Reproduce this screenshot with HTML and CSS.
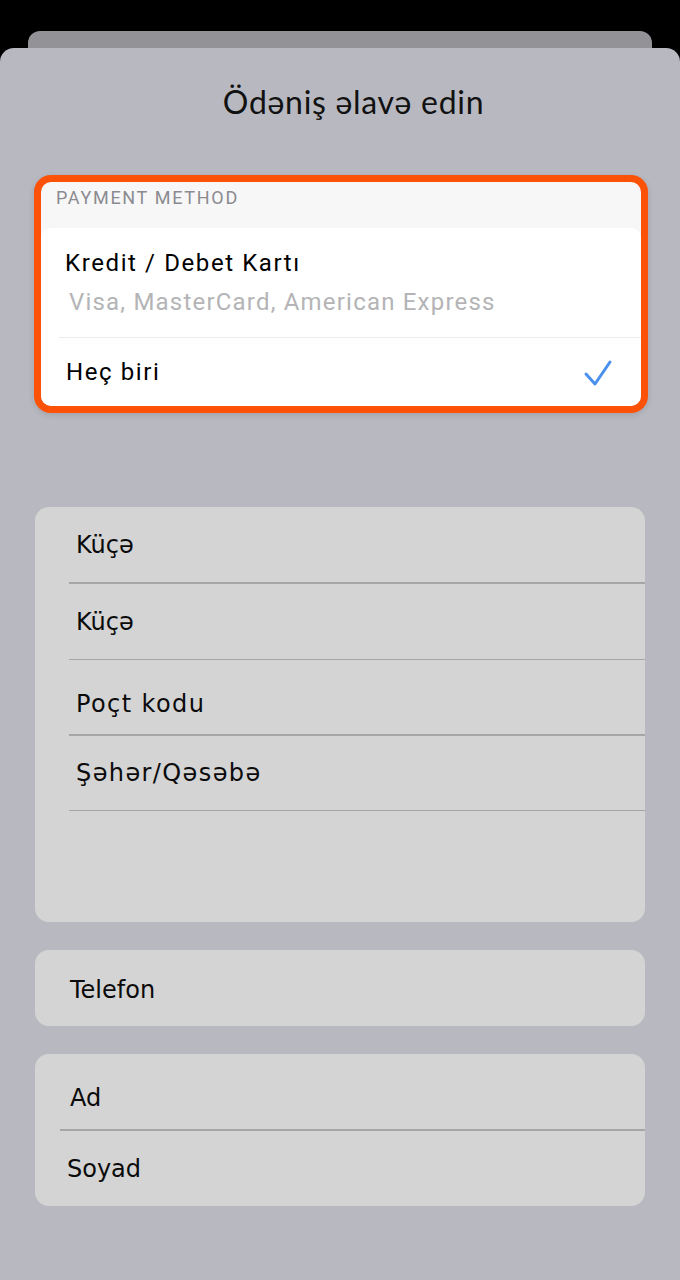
FILE: index.html
```html
<!DOCTYPE html>
<html lang="az">
<head>
<meta charset="utf-8">
<link rel="stylesheet" href="styles.css">
</head>
<body>
<div class="screen">
  <div class="back-card"></div>
  <div class="sheet">
    <h1 class="title">Ödəniş əlavə edin</h1>

    <div class="payment">
      <div class="payment-inner">
        <div class="payment-header">PAYMENT METHOD</div>
        <div class="payment-list">
          <div class="pay-row pay-row-card">
            <div class="pay-title">Kredit / Debet Kartı</div>
            <div class="pay-sub">Visa, MasterCard, American Express</div>
          </div>
          <div class="pay-sep"></div>
          <div class="pay-row pay-row-none">
            <div class="pay-title">Heç biri</div>
            <svg class="check" width="30" height="28" viewBox="0 0 30 28">
              <path d="M3 15 L12 25 L27 3" fill="none" stroke="#4a90ef" stroke-width="3" stroke-linecap="round" stroke-linejoin="round"/>
            </svg>
          </div>
        </div>
      </div>
    </div>

    <div class="card address">
      <div class="field f1">Küçə</div>
      <div class="sep"></div>
      <div class="field f2">Küçə</div>
      <div class="sep"></div>
      <div class="field f3">Poçt kodu</div>
      <div class="sep"></div>
      <div class="field f4">Şəhər/Qəsəbə</div>
      <div class="sep"></div>
    </div>

    <div class="card phone">
      <div class="field">Telefon</div>
    </div>

    <div class="card name">
      <div class="field f-ad">Ad</div>
      <div class="sep sep-name"></div>
      <div class="field f-soyad">Soyad</div>
    </div>
  </div>
</div>
</body>
</html>
```

FILE: styles.css
```css
* { box-sizing: border-box; }
html, body { margin: 0; padding: 0; }
body {
  background: #000;
  font-family: "DejaVu Sans", "Noto Sans", sans-serif;
  width: 680px;
  height: 1280px;
  overflow: hidden;
}
.screen {
  padding-top: 31px;
}
.back-card {
  margin: 0 28px;
  height: 17px;
  background: #939297;
  border-radius: 12px 12px 0 0;
}
.sheet {
  background: #b8b9c0;
  border-radius: 14px 14px 0 0;
  height: 1232px;
  padding-top: 1px;
}
.title {
  margin: 33px 0 0;
  padding-left: 27px;
  font-family: "Lato", "Noto Sans", sans-serif;
  font-weight: 400;
  font-size: 32px;
  letter-spacing: 0.7px;
  line-height: 40px;
  text-align: center;
  color: #111;
  height: 93px;
}
.payment {
  margin: 0 32px 0 34px;
  border: 7px solid #fc5207;
  border-radius: 17px;
  background: #f7f7f8;
  box-shadow: 0 2px 6px rgba(0,0,0,0.12);
  overflow: hidden;
}
.payment-inner {
  border-radius: 10px;
  overflow: hidden;
}
.payment-header {
  height: 46px;
  padding: 6px 0 0 15px;
  font-family: "Roboto", "Liberation Sans", sans-serif;
  font-size: 18px;
  letter-spacing: 1.7px;
  color: #8b8b90;
  line-height: 20px;
}
.payment-list {
  background: #fff;
  border-radius: 10px 10px 0 0;
}
.pay-row {
  padding-left: 24px;
  font-family: "Roboto", "Liberation Sans", sans-serif;
}
.pay-row-card {
  height: 109px;
  padding-top: 20px;
}
.pay-title {
  font-size: 24px;
  line-height: 30px;
  color: #000;
  letter-spacing: 1.6px;
}
.pay-sub {
  font-size: 24px;
  line-height: 30px;
  color: #b4b4b6;
  margin-top: 9px;
  padding-left: 4px;
  letter-spacing: 1.2px;
}
.pay-sep {
  height: 1px;
  background: #ececee;
  margin-left: 18px;
}
.pay-row-none {
  height: 68px;
  display: flex;
  align-items: center;
  justify-content: space-between;
  padding-left: 25px;
  padding-right: 28px;
}
.pay-row-none .check {
  margin-top: 2px;
}
.address {
  margin-top: 94px;
}
.card {
  margin-left: 35px;
  margin-right: 35px;
  background: #d4d4d4;
  border-radius: 14px;
  overflow: hidden;
}
.field {
  padding-left: 41px;
  font-size: 24px;
  color: #0b0b0b;
  display: flex;
  align-items: center;
}
.sep {
  height: 1.5px;
  background: #a6a6a6;
  margin-left: 34px;
}
.address { height: 415px; }
.f1 { height: 75px; padding-top: 1px; }
.f2 { height: 75px; padding-top: 2px; }
.f3 { height: 74px; padding-top: 13px; letter-spacing: 1.4px; }
.f4 { height: 74px; padding-top: 0; letter-spacing: 1.4px; }
.phone {
  margin-top: 28px;
  height: 76px;
}
.phone .field {
  height: 76px;
  padding-left: 35px;
  padding-top: 4px;
}
.name {
  margin-top: 28px;
  height: 152px;
}
.f-ad {
  height: 75px;
  padding-left: 35px;
  padding-top: 12px;
}
.sep-name {
  margin-left: 25px;
}
.f-soyad {
  height: 75px;
  padding-left: 32px;
  padding-top: 2px;
}
```
